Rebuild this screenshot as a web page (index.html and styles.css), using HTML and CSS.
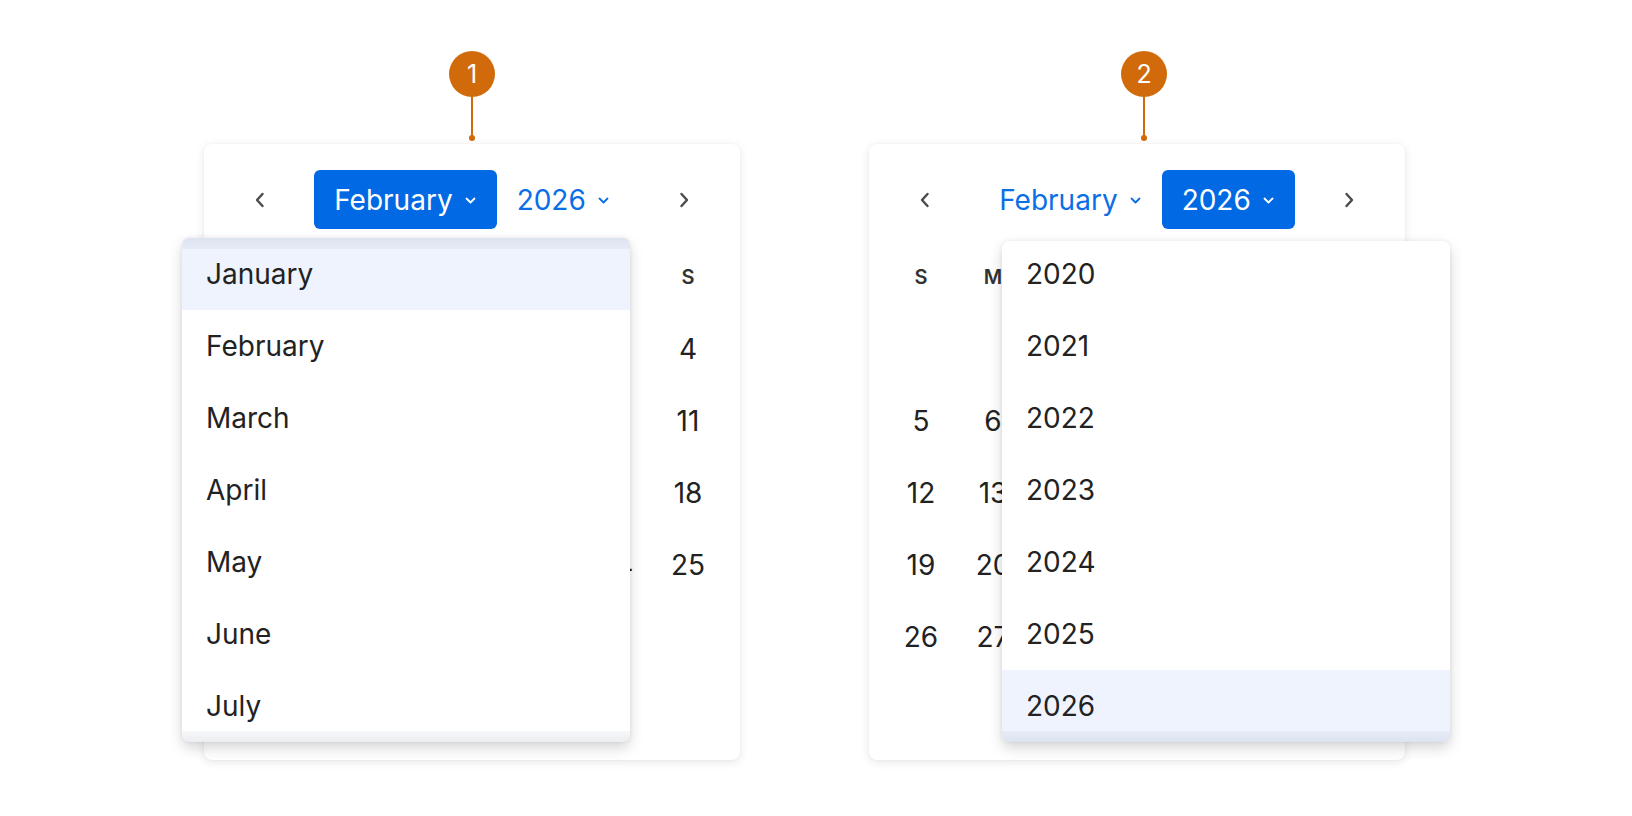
FILE: index.html
```html
<!DOCTYPE html>
<html lang="en">
<head>
<meta charset="utf-8">
<title>Date picker dropdowns</title>
<link rel="stylesheet" href="styles.css">
</head>
<body>
<main class="stage">
  <section class="figure">
    <div class="marker">
      <span class="badge">1</span>
      <span class="stem"></span>
      <span class="dot"></span>
    </div>
    <div class="card">
      <div class="nav">
        <button class="nav-arrow" aria-label="Previous month">
          <svg width="10" height="16" viewBox="0 0 10 16"><path d="M7.5 2L2 8l5.5 6" fill="none" stroke="currentColor" stroke-width="2.4" stroke-linecap="round" stroke-linejoin="round"/></svg>
        </button>
        <div class="pickers">
          <button class="picker picker--active">February<svg class="caret" width="11" height="7" viewBox="0 0 11 7"><path d="M1.5 1.5l4 4 4-4" fill="none" stroke="currentColor" stroke-width="1.8" stroke-linecap="round" stroke-linejoin="round"/></svg></button>
          <button class="picker">2026<svg class="caret" width="11" height="7" viewBox="0 0 11 7"><path d="M1.5 1.5l4 4 4-4" fill="none" stroke="currentColor" stroke-width="1.8" stroke-linecap="round" stroke-linejoin="round"/></svg></button>
        </div>
        <button class="nav-arrow" aria-label="Next month">
          <svg width="10" height="16" viewBox="0 0 10 16"><path d="M2.5 2L8 8l-5.5 6" fill="none" stroke="currentColor" stroke-width="2.4" stroke-linecap="round" stroke-linejoin="round"/></svg>
        </button>
      </div>
      <div class="grid weekdays">
        <span>S</span><span>M</span><span>T</span><span>W</span><span>T</span><span>F</span><span>S</span>
      </div>
      <div class="grid days">
        <span></span><span></span><span></span><span>1</span><span>2</span><span>3</span><span>4</span>
        <span>5</span><span>6</span><span>7</span><span>8</span><span>9</span><span>10</span><span>11</span>
        <span>12</span><span>13</span><span>14</span><span>15</span><span>16</span><span>17</span><span>18</span>
        <span>19</span><span>20</span><span>21</span><span>22</span><span>23</span><span>24</span><span>25</span>
        <span>26</span><span>27</span><span>28</span><span></span><span></span><span></span><span></span>
        <span></span><span></span><span></span><span></span><span></span><span></span><span></span>
      </div>
      <ul class="menu menu--months fade-top fade-bottom">
        <li class="menu-item is-current">January</li>
        <li class="menu-item">February</li>
        <li class="menu-item">March</li>
        <li class="menu-item">April</li>
        <li class="menu-item">May</li>
        <li class="menu-item">June</li>
        <li class="menu-item">July</li>
      </ul>
    </div>
  </section>

  <section class="figure">
    <div class="marker marker--shifted">
      <span class="badge">2</span>
      <span class="stem"></span>
      <span class="dot"></span>
    </div>
    <div class="card">
      <div class="nav">
        <button class="nav-arrow" aria-label="Previous month">
          <svg width="10" height="16" viewBox="0 0 10 16"><path d="M7.5 2L2 8l5.5 6" fill="none" stroke="currentColor" stroke-width="2.4" stroke-linecap="round" stroke-linejoin="round"/></svg>
        </button>
        <div class="pickers">
          <button class="picker">February<svg class="caret" width="11" height="7" viewBox="0 0 11 7"><path d="M1.5 1.5l4 4 4-4" fill="none" stroke="currentColor" stroke-width="1.8" stroke-linecap="round" stroke-linejoin="round"/></svg></button>
          <button class="picker picker--active">2026<svg class="caret" width="11" height="7" viewBox="0 0 11 7"><path d="M1.5 1.5l4 4 4-4" fill="none" stroke="currentColor" stroke-width="1.8" stroke-linecap="round" stroke-linejoin="round"/></svg></button>
        </div>
        <button class="nav-arrow" aria-label="Next month">
          <svg width="10" height="16" viewBox="0 0 10 16"><path d="M2.5 2L8 8l-5.5 6" fill="none" stroke="currentColor" stroke-width="2.4" stroke-linecap="round" stroke-linejoin="round"/></svg>
        </button>
      </div>
      <div class="grid weekdays">
        <span>S</span><span>M</span><span>T</span><span>W</span><span>T</span><span>F</span><span>S</span>
      </div>
      <div class="grid days">
        <span></span><span></span><span></span><span>1</span><span>2</span><span>3</span><span>4</span>
        <span>5</span><span>6</span><span>7</span><span>8</span><span>9</span><span>10</span><span>11</span>
        <span>12</span><span>13</span><span>14</span><span>15</span><span>16</span><span>17</span><span>18</span>
        <span>19</span><span>20</span><span>21</span><span>22</span><span>23</span><span>24</span><span>25</span>
        <span>26</span><span>27</span><span>28</span><span></span><span></span><span></span><span></span>
        <span></span><span></span><span></span><span></span><span></span><span></span><span></span>
      </div>
      <ul class="menu menu--years fade-bottom">
        <li class="menu-item">2020</li>
        <li class="menu-item">2021</li>
        <li class="menu-item">2022</li>
        <li class="menu-item">2023</li>
        <li class="menu-item">2024</li>
        <li class="menu-item">2025</li>
        <li class="menu-item is-current">2026</li>
      </ul>
    </div>
  </section>
</main>
</body>
</html>
```

FILE: styles.css
```css
* {
  box-sizing: border-box;
}

html, body {
  margin: 0;
  padding: 0;
  background: #ffffff;
}

body {
  font-family: "Inter", "Noto Sans", "Liberation Sans", sans-serif;
  color: #222222;
  width: 1632px;
  height: 816px;
  overflow: hidden;
}

.stage {
  display: flex;
  align-items: flex-start;
  gap: 129px;
  padding: 51px 0 0 204px;
}

.figure {
  display: flex;
  flex-direction: column;
  align-items: center;
  width: 536px;
}

.marker {
  display: flex;
  flex-direction: column;
  align-items: center;
}

.marker--shifted {
  margin-left: 14px;
}

.badge {
  width: 46px;
  height: 46px;
  border-radius: 50%;
  background: #d16a0b;
  color: #ffffff;
  font-size: 25px;
  line-height: 46px;
  text-align: center;
}

.stem {
  width: 2px;
  height: 40px;
  background: #d16a0b;
}

.dot {
  width: 6px;
  height: 6px;
  border-radius: 50%;
  background: #d16a0b;
  margin-top: -2px;
}

.card {
  position: relative;
  width: 536px;
  height: 616px;
  margin-top: 3px;
  background: #ffffff;
  border-radius: 8px;
  box-shadow: 0 2px 10px rgba(0, 0, 0, 0.10), 0 0 2px rgba(0, 0, 0, 0.05);
}

.nav {
  display: flex;
  align-items: center;
  justify-content: space-between;
  padding: 26px 24px 0;
  height: 85px;
}

.nav-arrow {
  width: 64px;
  height: 59px;
  border: 0;
  background: transparent;
  color: #4a4a4a;
  display: flex;
  align-items: center;
  justify-content: center;
  padding: 0;
}

.pickers {
  display: flex;
}

.picker {
  display: flex;
  align-items: center;
  gap: 12px;
  height: 59px;
  padding: 0 21px 0 20px;
  border: 0;
  border-radius: 6px;
  background: transparent;
  color: #0a6ee6;
  font-family: inherit;
  font-size: 28px;
  font-weight: 400;
}

.picker--active {
  background: #0069e3;
  color: #ffffff;
}

.caret {
  margin-top: 2px;
}

.grid {
  display: grid;
  grid-template-columns: repeat(7, 72px);
  grid-auto-rows: 72px;
  padding: 0 16px;
}

.grid span {
  display: flex;
  align-items: center;
  justify-content: center;
}

.weekdays {
  margin-top: 12px;
  font-size: 20px;
  font-weight: 600;
  color: #333333;
}

.days {
  font-size: 28px;
  color: #222222;
}

.menu {
  position: absolute;
  top: 94px;
  width: 448px;
  height: 504px;
  margin: 0;
  padding: 0;
  list-style: none;
  background: #ffffff;
  border-radius: 7px;
  overflow: hidden;
  box-shadow: 0 6px 14px rgba(0, 0, 0, 0.16), 0 0 4px rgba(0, 0, 0, 0.07);
}

.menu--months {
  left: -22px;
}

.menu--years {
  left: 133px;
  top: 97px;
  height: 501px;
  padding-top: 0;
}

.menu--years .menu-item:first-child {
  margin-top: -3px;
}

.menu-item {
  height: 72px;
  display: flex;
  align-items: center;
  padding-left: 24px;
  font-size: 28px;
  color: #222222;
}

.menu-item.is-current {
  background: #eef3fd;
}

.fade-top::before,
.fade-bottom::after {
  content: "";
  position: absolute;
  left: 0;
  right: 0;
  height: 11px;
  pointer-events: none;
}

.fade-top::before {
  top: 0;
  background: linear-gradient(to bottom, rgba(40, 60, 100, 0.09), rgba(40, 60, 100, 0.04));
}

.fade-bottom::after {
  bottom: 0;
  background: linear-gradient(to top, rgba(40, 60, 100, 0.09), rgba(40, 60, 100, 0.04));
}
```
